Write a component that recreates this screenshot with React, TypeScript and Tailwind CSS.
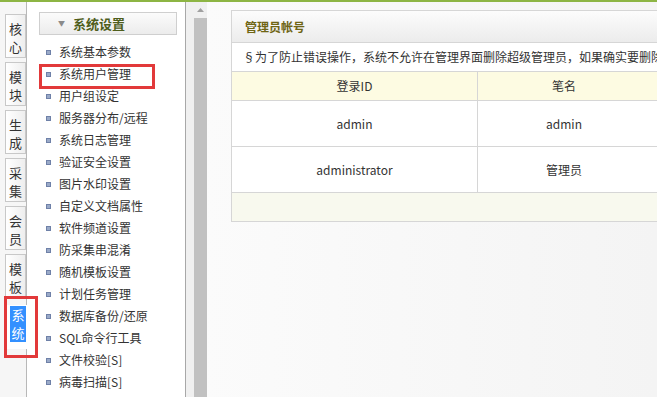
import React from "react";

const tabs = [
  ["核", "心"],
  ["模", "块"],
  ["生", "成"],
  ["采", "集"],
  ["会", "员"],
  ["模", "板"],
];

const items = [
  "系统基本参数",
  "系统用户管理",
  "用户组设定",
  "服务器分布/远程",
  "系统日志管理",
  "验证安全设置",
  "图片水印设置",
  "自定义文档属性",
  "软件频道设置",
  "防采集串混淆",
  "随机模板设置",
  "计划任务管理",
  "数据库备份/还原",
  "SQL命令行工具",
  "文件校验[S]",
  "病毒扫描[S]",
];

const font = { fontFamily: '"Noto Sans CJK SC", "Microsoft YaHei", sans-serif' };

export default function App() {
  return (
    <div
      className="relative w-[657px] h-[397px] overflow-hidden bg-[#f4f4f4] border-t-2 border-[#8db544] text-[#333]"
      style={font}
    >
      <div className="flex h-full">
        {/* Left tabs */}
        <div className="w-[27px] shrink-0 bg-[#f6f6f6] border-r border-[#b8b8b8] flex flex-col pt-[12px] gap-[4px] pl-[5px]">
          {tabs.map((t, i) => (
            <div
              key={i}
              className="h-[44px] w-[21px] border border-[#c8c8c8] bg-gradient-to-r from-[#ffffff] to-[#eeeeee] flex flex-col items-center pt-[5px] text-[13px] leading-[18px] text-[#333]"
            >
              <span>{t[0]}</span>
              <span>{t[1]}</span>
            </div>
          ))}
          <div className="mt-[3px] h-[44px] w-[22px] border-l-2 border-[#c9c98c] bg-white flex flex-col items-center pt-[1px] pl-[2px] text-[13px] leading-[18px]">
            <span className="bg-[#3390ff] text-white px-[1px]">系</span>
            <span className="bg-[#3390ff] text-white px-[1px]">统</span>
          </div>
        </div>

        {/* Menu */}
        <div className="w-[159px] shrink-0 bg-white border-r border-[#a8a8a8] pt-[10px]">
          <div className="ml-[12px] w-[138px] h-[23px] border border-[#cfcfcf] bg-gradient-to-b from-[#fbfbfb] to-[#ececec] flex items-center">
            <span className="ml-[18px] text-[7px] text-[#8a8a8a]">▼</span>
            <span className="ml-[8px] text-[13px] font-bold text-[#4f5e1c]">系统设置</span>
          </div>
          <div className="mt-[6px] flex flex-col">
            {items.map((it) => (
              <div key={it} className="h-[22px] flex items-center pl-[19px] text-[12px] text-[#333]">
                <span className="w-[5px] h-[5px] bg-[#9aaac8] border border-[#6f81a8] mr-[8px] shrink-0" />
                <span>{it}</span>
              </div>
            ))}
          </div>
        </div>

        {/* Scroll area */}
        <div className="w-[8px] shrink-0 bg-[#f0f0f0]" />
        <div className="w-[13px] shrink-0 flex flex-col bg-[#e6e6e6]">
          <div className="h-[16px] bg-[#f0f0f0] flex items-start justify-center pt-[6px]">
            <svg width="7" height="4" viewBox="0 0 7 4">
              <path d="M0 4 L3.5 0 L7 4 Z" fill="#a0a0a0" />
            </svg>
          </div>
          <div className="flex-1 bg-[#c1c1c1]" />
        </div>

        {/* Main */}
        <div className="flex-1 bg-gradient-to-r from-[#fbfbfb] to-[#f4f4f4] pl-[24px] pt-[8px] overflow-hidden">
          <div className="w-[600px] border border-[#d6d6d6] bg-white">
            <div className="h-[32px] bg-gradient-to-b from-[#fcfcfc] to-[#ececec] border-b border-[#d6d6d6] flex items-center pl-[13px] text-[12px] font-bold text-[#6f6514]">
              管理员帐号
            </div>
            <div className="h-[29px] border-b border-[#d6d6d6] flex items-center pl-[11px] text-[12px] whitespace-nowrap text-[#333]">
              §为了防止错误操作，系统不允许在管理界面删除超级管理员，如果确实要删除
            </div>
            <div className="flex h-[29px] bg-[#fdfbe2] border-b border-[#d6d6d6] text-[12px]">
              <div className="w-[246px] border-r border-[#d6d6d6] flex items-center justify-center">登录ID</div>
              <div className="w-[172px] flex items-center justify-center">笔名</div>
            </div>
            <div className="flex h-[46px] border-b border-[#d6d6d6] text-[12px]">
              <div className="w-[246px] border-r border-[#d6d6d6] flex items-center justify-center">admin</div>
              <div className="w-[172px] flex items-center justify-center">admin</div>
            </div>
            <div className="flex h-[46px] border-b border-[#d6d6d6] text-[12px]">
              <div className="w-[246px] border-r border-[#d6d6d6] flex items-center justify-center">administrator</div>
              <div className="w-[172px] flex items-center justify-center">管理员</div>
            </div>
            <div className="h-[28px] bg-[#f8f9ee]" />
          </div>
        </div>
      </div>

      {/* Red annotation boxes */}
      <div className="absolute left-[4px] top-[294px] w-[34px] h-[62px] border-[3px] border-[#e2393a]" />
      <div className="absolute left-[39px] top-[62px] w-[116px] h-[25px] border-[3px] border-[#e2393a]" />
    </div>
  );
}
